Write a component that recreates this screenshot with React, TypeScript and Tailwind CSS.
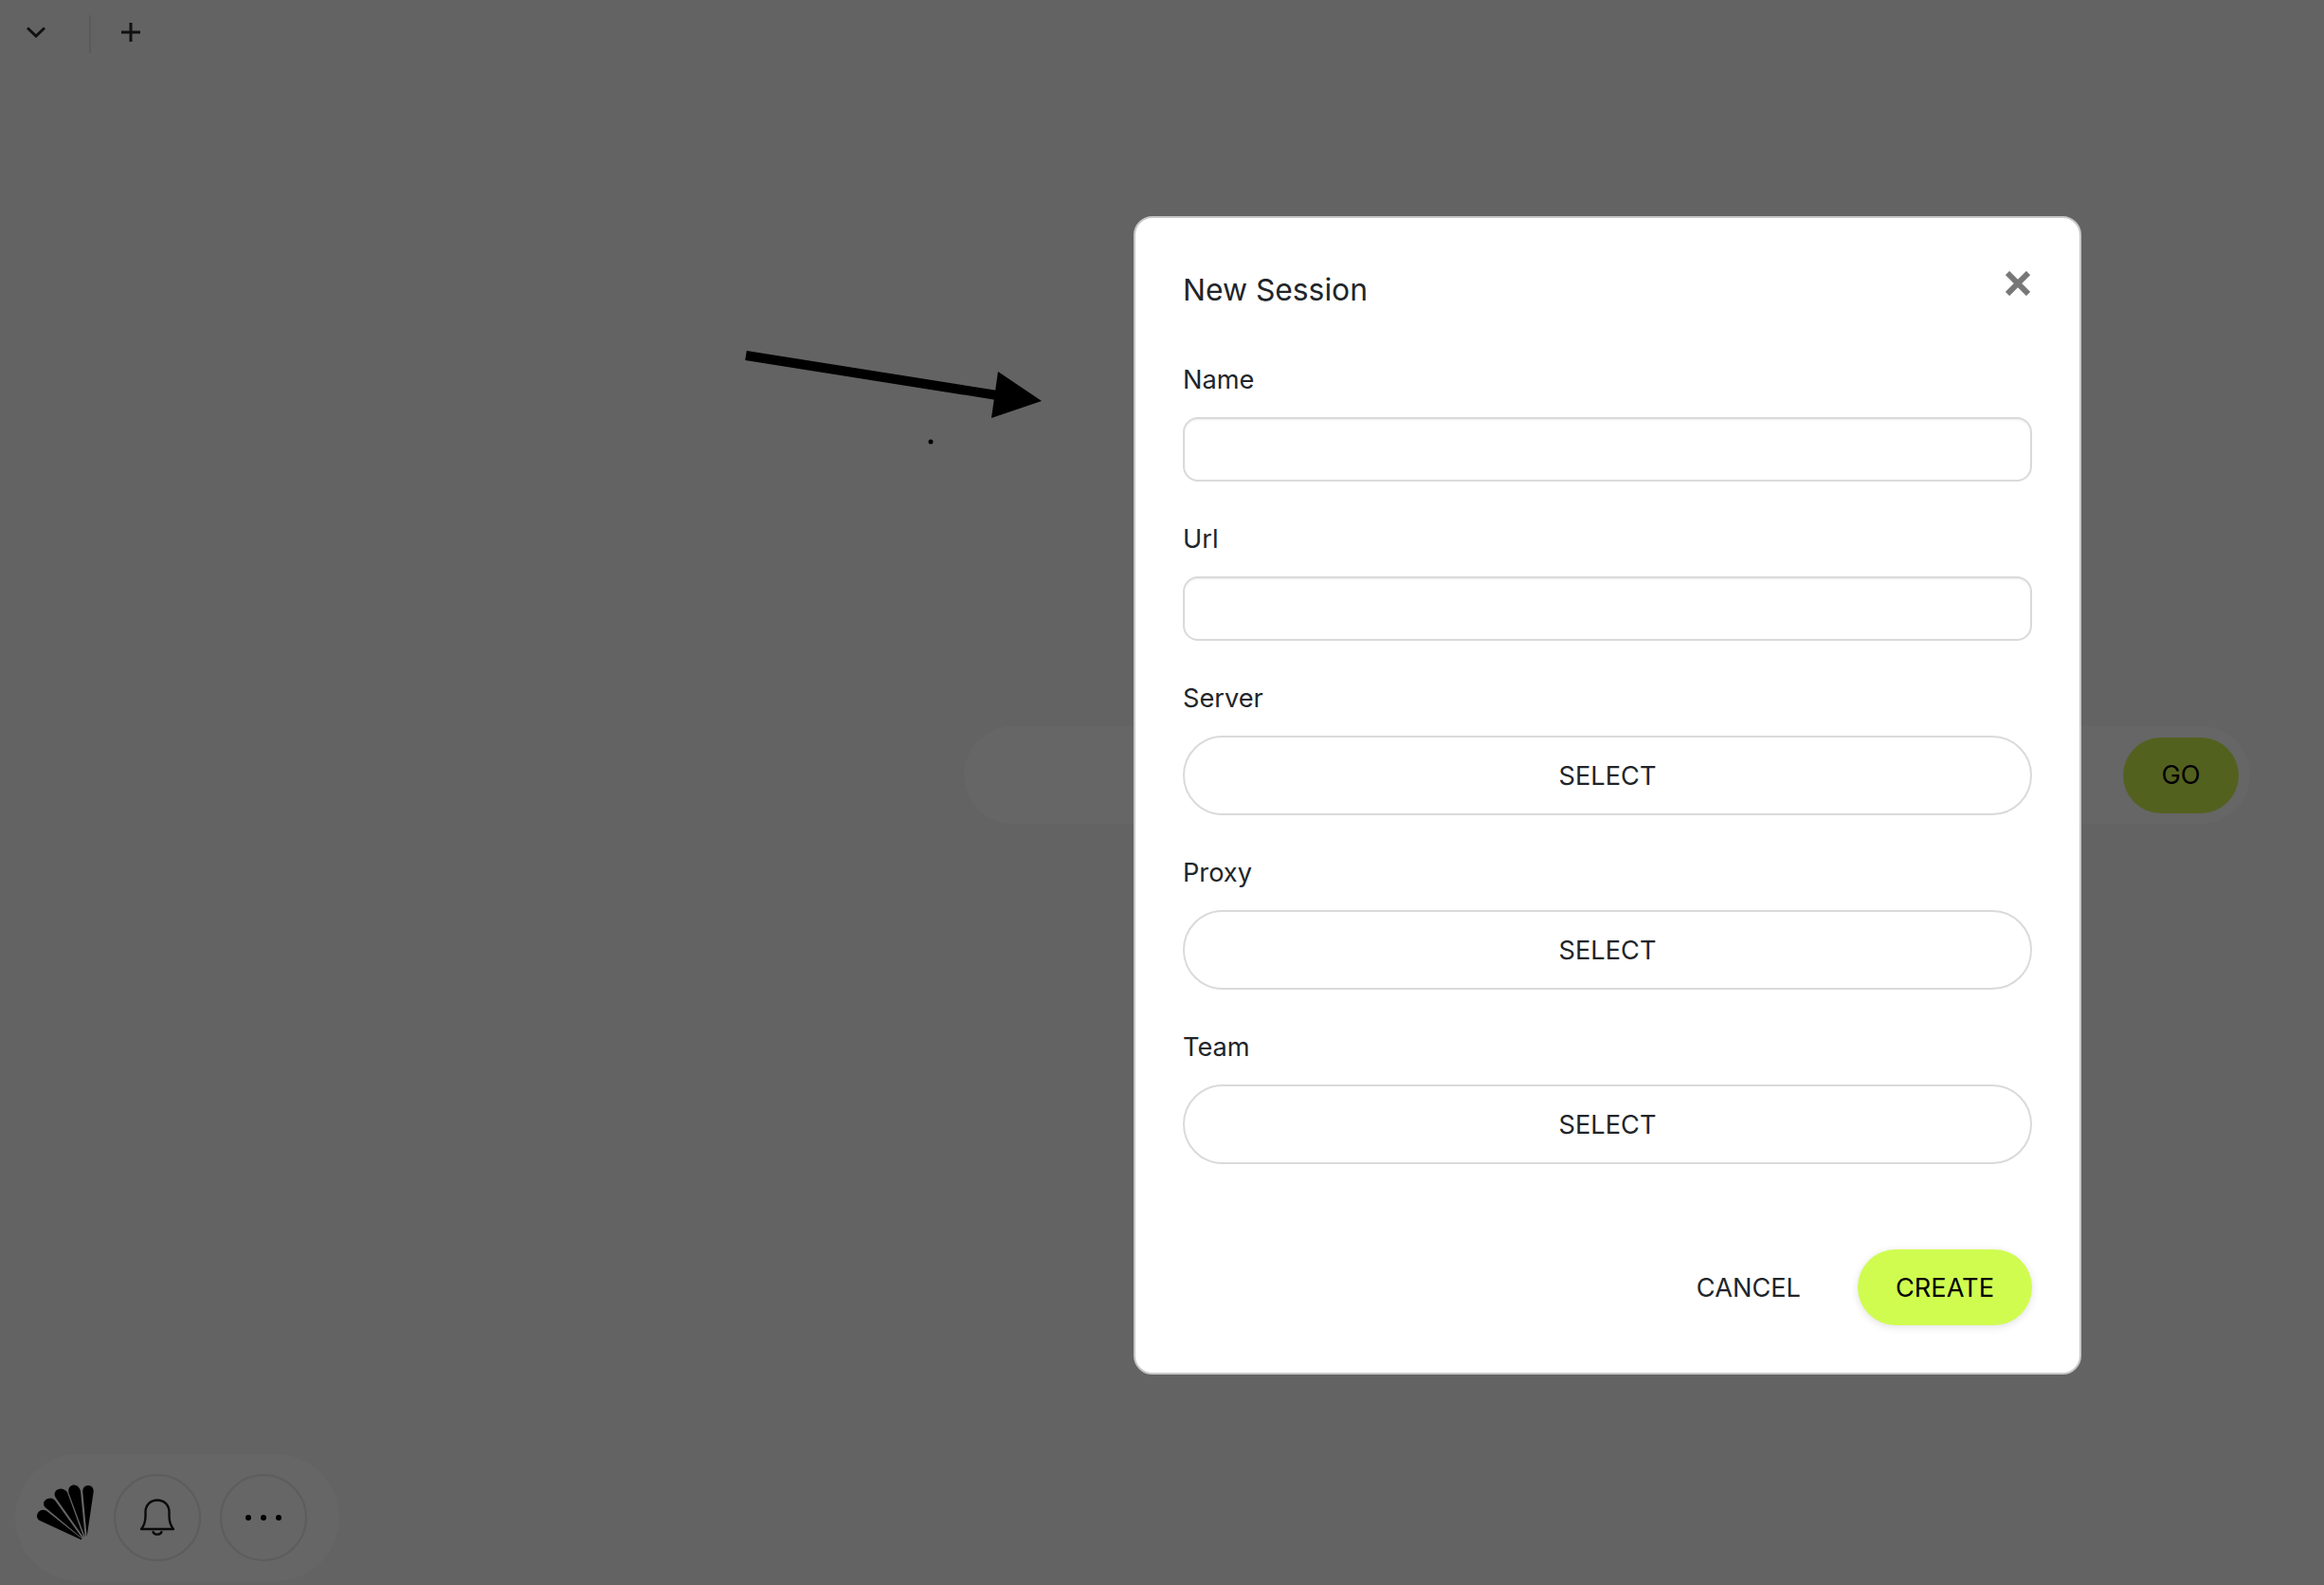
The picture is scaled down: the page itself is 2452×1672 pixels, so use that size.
import React from 'react';

const FONT = 'font-[Inter,"Liberation_Sans",sans-serif]';

function TextField({ label }: { label: string }) {
  return (
    <div className="flex flex-col">
      <label className="h-[34px] text-[27.2px] leading-[36px] text-[#212529]">{label}</label>
      <input
        type="text"
        className="mt-[23px] h-[68px] w-full rounded-[16px] border-2 border-[#dadada] bg-white shadow-[inset_0_1px_2px_rgba(0,0,0,0.075)] outline-none"
      />
    </div>
  );
}

function SelectField({ label }: { label: string }) {
  return (
    <div className="flex flex-col">
      <label className="h-[34px] text-[27.2px] leading-[36px] text-[#212529]">{label}</label>
      <button className="mt-[23px] h-[84px] w-full rounded-full border-2 border-[#dadada] bg-white pt-[2px] text-[27.2px] text-[#212529]">
        SELECT
      </button>
    </div>
  );
}

// fan logo, five petals meeting near the bottom right
function FanLogo() {
  const petals = [
    'M273 302 L260 160 C258 133 296 133 294 160 Z',
    'M267 303 L216 165 C208 135 245 128 253 158 Z',
    'M263 305 L174 178 C160 155 195 138 211 162 Z',
    'M259 308 L140 208 C125 190 155 170 172 187 Z',
    'M255 312 L122 250 C105 238 122 208 145 220 L257 309 Z',
  ];
  return (
    <svg width="62" height="60" viewBox="112 134 186 180" className="shrink-0 fill-black">
      {petals.map((d) => (
        <path key={d} d={d} />
      ))}
    </svg>
  );
}

function Bell() {
  return (
    <svg width="36" height="40" viewBox="0 0 36 40" fill="none" stroke="#0a0a0a" strokeWidth="2.4">
      <path d="M1 32 H35 C31.5 28 30.5 24 30.5 18 V14 C30.5 6.5 25 1.5 18 1.5 C11 1.5 5.5 6.5 5.5 14 V18 C5.5 24 4.5 28 1 32 Z" strokeLinejoin="round" />
      <path d="M13.5 35 C15 38.5 21 38.5 22.5 35" strokeLinecap="round" />
    </svg>
  );
}

export default function App() {
  return (
    <div className={`${FONT} relative flex h-[1672px] w-[2452px] flex-col overflow-hidden bg-[#636363]`}>
      {/* top bar */}
      <div className="flex h-[66px] items-start pl-[28px] pt-[16px]">
        <svg width="20" height="12" viewBox="0 0 20 12" fill="none" stroke="#111" strokeWidth="3" className="mt-[12px]">
          <path d="M1 1.5 L10 10 L19 1.5" />
        </svg>
        <div className="ml-[46px] h-[40px] w-[2px] bg-[#5a5a5a]" />
        <svg width="20" height="20" viewBox="0 0 20 20" stroke="#111" strokeWidth="3" className="ml-[32px] mt-[8px]">
          <path d="M10 0 V20 M0 10 H20" />
        </svg>
      </div>

      {/* dimmed search bar behind the dialog */}
      <div className="ml-[1017px] mt-[700px] flex h-[103px] w-[1357px] items-center justify-end rounded-full bg-[#666666] pr-[12px]">
        <button className="flex h-[80px] w-[122px] items-center justify-center rounded-full bg-[#53611f] pt-[2px] text-[27.2px] text-black">
          GO
        </button>
      </div>

      {/* dock */}
      <div className="ml-[16px] mt-auto mb-[4px] flex h-[134px] w-[342px] items-center rounded-full bg-[#666666] pl-[22px]">
        <span className="-mt-[12px] flex">
          <FanLogo />
        </span>
        <div className="ml-[20px] flex h-[92px] w-[92px] items-center justify-center rounded-full border-2 border-[#5d5d5d]">
          <Bell />
        </div>
        <div className="ml-[20px] flex h-[92px] w-[92px] items-center justify-center gap-[10px] rounded-full border-2 border-[#5d5d5d]">
          <span className="h-[6px] w-[6px] rounded-full bg-black" />
          <span className="h-[6px] w-[6px] rounded-full bg-black" />
          <span className="h-[6px] w-[6px] rounded-full bg-black" />
        </div>
      </div>

      {/* arrow annotation */}
      <svg width="2452" height="1672" className="pointer-events-none absolute left-0 top-0">
        <path d="M787 375 L1052 417" stroke="#000" strokeWidth="10" fill="none" />
        <polygon points="1053,392 1099,423 1046,441" fill="#000" />
        <circle cx="982" cy="466" r="2.5" fill="#000" />
      </svg>

      {/* dialog */}
      <div className="absolute left-[1196px] top-[228px] flex h-[1222px] w-[1000px] flex-col rounded-[20px] border-2 border-[#c8c8c8] bg-white px-[50px] pt-[56px]">
        <div className="flex items-start justify-between">
          <h2 className="text-[31.8px] leading-[40px] text-[#212529]">New Session</h2>
          <svg width="26" height="26" viewBox="0 0 26 26" stroke="#777" strokeWidth="6" className="mr-[2px] mt-0">
            <path d="M2 2 L24 24 M24 2 L2 24" />
          </svg>
        </div>
        <div className="mt-[57px] flex flex-col gap-[43px]">
          <TextField label="Name" />
          <TextField label="Url" />
          <SelectField label="Server" />
          <SelectField label="Proxy" />
          <SelectField label="Team" />
        </div>
        <div className="mt-[90px] flex items-center justify-end">
          <button className="pt-[2px] text-[27.2px] text-[#212529]">CANCEL</button>
          <button className="ml-[60px] h-[80px] w-[184px] rounded-full bg-[#d0fc50] pt-[2px] text-[27.2px] text-black shadow-[0_2px_8px_rgba(0,0,0,0.12)]">
            CREATE
          </button>
        </div>
      </div>
    </div>
  );
}
